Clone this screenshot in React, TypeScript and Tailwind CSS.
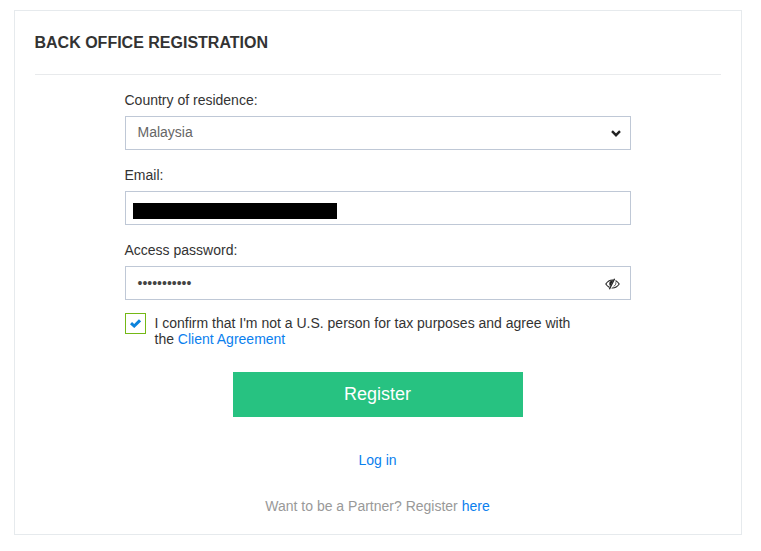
import { useState } from 'react';
import type { ReactNode } from 'react';

function Field({ label, children }: { label: string; children: ReactNode }) {
  return (
    <div className="mb-[17px]">
      <div className="-ml-px mb-2 pl-[0.5px] leading-4">{label}</div>
      <div className="flex h-[34px] items-center justify-between border border-[#bfc8d6] text-[#666]">
        {children}
      </div>
    </div>
  );
}

function ChevronIcon() {
  return (
    <svg className="mr-[9px] h-[7px] w-[10px]" viewBox="0 0 10 7" fill="none">
      <path d="M1 1.2 L5 5.2 L9 1.2" stroke="#222" strokeWidth="2.4" />
    </svg>
  );
}

function HiddenEyeIcon() {
  return (
    <svg className="mt-px mr-[10px] h-[12px] w-[15px]" viewBox="0 0 15 12" fill="none" stroke="#222">
      <path d="M.8 6 C3 2.7 5.2 2 7.5 2 C9.8 2 12 2.7 14.2 6 C12 9.3 9.8 10 7.5 10 C5.2 10 3 9.3 .8 6 Z" strokeWidth="1.1" />
      <path d="M8.7 2.3 C5.5 2 4.1 4 4.3 6 C4.4 7.3 5 8.2 6 8.7 Z" fill="#222" stroke="none" />
      <path d="M10.3 .7 L4.8 11.3" stroke="#fff" strokeWidth="2" />
      <path d="M9.6 .7 L4.4 11.3" strokeWidth="1.3" />
      <path d="M10.8 4.3 C11.1 6 10.3 7.6 8.6 8.3" strokeWidth=".8" />
    </svg>
  );
}

function CheckIcon() {
  return (
    <svg className="h-[9px] w-[11px]" viewBox="0 0 11 9" fill="none">
      <path d="M1 4.1 L4.2 7 L10 1.3" stroke="#0c83dc" strokeWidth="3" />
    </svg>
  );
}

export default function App() {
  const [agreed, setAgreed] = useState(true);

  return (
    <div className="min-h-screen bg-white pt-[10px] pl-[14px] font-['Liberation_Sans',Arial,sans-serif] text-sm text-[#333]">
      <div className="h-[525px] w-[728px] border border-[#e6eaed] px-5">
        <h1 className="h-16 border-b border-[#e8eaec] pt-5 text-base leading-6 font-bold">
          <span className="-ml-[0.5px]">BACK OFFICE REGISTRATION</span>
        </h1>

        <form className="mx-auto w-[506px] pt-[17px]" onSubmit={(e) => e.preventDefault()}>
          <Field label="Country of residence:">
            <span className="pb-0.5 pl-[11.5px]">Malaysia</span>
            <ChevronIcon />
          </Field>

          <Field label="Email:">
            <span className="mt-[5px] ml-[7px] h-4 w-[204px] bg-black" />
          </Field>

          <Field label="Access password:">
            <span className="pl-[11.5px] text-[#444]">•••••••••••</span>
            <HiddenEyeIcon />
          </Field>

          {/* Agreement */}
          <div className="-mt-1 flex">
            <button
              type="button"
              role="checkbox"
              aria-checked={agreed}
              aria-label="I agree"
              onClick={() => setAgreed(!agreed)}
              className="flex h-[21px] w-[21px] shrink-0 items-center justify-center border border-[#74b816]"
            >
              {agreed && <CheckIcon />}
            </button>
            <p className="ml-[8.5px] pt-0.5 leading-4">
              I confirm that I'm not a U.S. person for tax purposes and agree with
              <br />
              the <a href="#" className="text-[#0b80ee]">Client Agreement</a>
            </p>
          </div>

          <button type="submit" className="mx-auto mt-[25px] block h-[45px] w-[290px] bg-[#27c281] pr-px pb-0.5 text-lg text-white">
            Register
          </button>
        </form>

        {/* Links */}
        <div className="mt-[35px] pr-px text-center leading-4">
          <a href="#" className="text-[#0b80ee]">Log in</a>
        </div>
        <div className="mt-[30px] pr-px text-center leading-4 text-[#999]">
          Want to be a Partner? Register <a href="#" className="text-[#0b80ee]">here</a>
        </div>
      </div>
    </div>
  );
}
